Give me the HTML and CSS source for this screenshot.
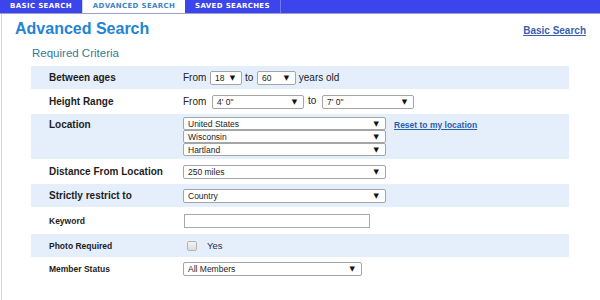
FILE: index.html
```html
<!DOCTYPE html>
<html lang="en">
<head>
    <meta charset="UTF-8">
    <meta name="viewport" content="width=device-width, initial-scale=1.0">
    <title>Advanced Search</title>
    <link rel="stylesheet" href="styles.css">
</head>
<body>
    <nav class="tabs">
        <a href="#" class="tab">Basic Search</a>
        <a href="#" class="tab active">Advanced Search</a>
        <a href="#" class="tab">Saved Searches</a>
    </nav>
    <div class="page">
        <div class="page-head">
            <h1>Advanced Search</h1>
            <a href="#" class="basic-link">Basic Search</a>
        </div>
        <h2>Required Criteria</h2>
        <table class="criteria">
            <tr class="shade">
                <td class="label">Between ages</td>
                <td class="value">
                    From <span class="select age">18</span> to <span class="select age wide">60</span> years old
                </td>
            </tr>
            <tr class="tall">
                <td class="label">Height Range</td>
                <td class="value">
                    From <span class="select height">4' 0"</span> <span class="to">to</span> <span class="select height">7' 0"</span>
                </td>
            </tr>
            <tr class="shade">
                <td class="label top">Location</td>
                <td class="value">
                    <div class="location">
                        <div class="stack">
                            <span class="select long">United States</span>
                            <span class="select long">Wisconsin</span>
                            <span class="select long">Hartland</span>
                        </div>
                        <a href="#" class="reset">Reset to my location</a>
                    </div>
                </td>
            </tr>
            <tr class="tall">
                <td class="label">Distance From Location</td>
                <td class="value"><span class="select long">250 miles</span></td>
            </tr>
            <tr class="shade">
                <td class="label">Strictly restrict to</td>
                <td class="value"><span class="select long">Country</span></td>
            </tr>
            <tr class="taller">
                <td class="label small">Keyword</td>
                <td class="value"><span class="text-input"></span></td>
            </tr>
            <tr class="shade">
                <td class="label small">Photo Required</td>
                <td class="value"><span class="checkbox"></span><span class="yes">Yes</span></td>
            </tr>
            <tr class="last">
                <td class="label small">Member Status</td>
                <td class="value"><span class="select status">All Members</span></td>
            </tr>
        </table>
    </div>
</body>
</html>
```

FILE: styles.css
```css
/* General */
* {
    margin: 0;
    padding: 0;
    box-sizing: border-box;
}

body {
    font-family: "Liberation Sans", Arial, sans-serif;
    background-color: #fff;
    color: #222;
}

/* Tab bar */
.tabs {
    display: flex;
    height: 14px;
    background-color: #3c44ee;
    border-bottom: 1px solid #9aa0c8;
}

.tab {
    flex: none;
    white-space: nowrap;
    font-family: "DejaVu Sans", Verdana, sans-serif;
    font-size: 7px;
    font-weight: bold;
    letter-spacing: 0.35px;
    text-transform: uppercase;
    color: #fff;
    text-decoration: none;
    text-align: center;
    line-height: 13px;
}

.tab:first-child {
    width: 82px;
}

.tab.active {
    background-color: #fff;
    color: #3d86c4;
    width: 103px;
    border-left: 1px solid #c9d6ee;
}

.tab:last-child {
    width: 96px;
    border-right: 1px solid #6f78f2;
}

/* Page */
.page {
    margin-left: 1px;
    border-left: 1px solid #d6d6d6;
    min-height: 286px;
    padding: 0 0 0 13px;
}

.page-head {
    display: flex;
    justify-content: space-between;
    align-items: flex-end;
    padding: 5px 14px 0 0;
}

h1 {
    font-size: 16px;
    font-weight: bold;
    color: #2384d6;
    line-height: 20px;
}

.basic-link {
    font-size: 10px;
    font-weight: bold;
    color: #3b5fae;
    margin-bottom: 3px;
}

h2 {
    font-size: 11.5px;
    font-weight: normal;
    color: #357a95;
    margin: 7px 0 0 17px;
    line-height: 14px;
}

/* Criteria table */
.criteria {
    width: 538px;
    margin: 6px 0 0 16px;
    border-collapse: collapse;
}

.criteria tr {
    height: 23px;
}

.criteria tr.tall {
    height: 25px;
}

.criteria tr.taller {
    height: 27px;
}

.criteria tr.last {
    height: 24px;
}

.criteria tr.shade {
    background-color: #e5effc;
}

.label {
    width: 152px;
    padding-left: 18px;
    font-size: 10px;
    font-weight: bold;
    color: #1d1d1d;
    vertical-align: middle;
}

.label.top {
    vertical-align: top;
    padding-top: 5px;
}

.label.small {
    font-size: 8.5px;
}

.value {
    font-size: 10px;
    color: #222;
    vertical-align: middle;
}

/* Fake selects */
.select {
    display: inline-flex;
    justify-content: space-between;
    align-items: center;
    height: 14px;
    padding: 0 6px 0 4px;
    border: 1px solid #a5a5a5;
    border-radius: 2px;
    background-color: #fff;
    font-size: 8.5px;
    color: #222;
    vertical-align: middle;
}

.select::after {
    content: "\25BC";
    font-family: "DejaVu Sans", sans-serif;
    font-size: 7px;
    color: #111;
}

.select.age {
    width: 32px;
    margin: 0 0 0 1px;
}

.select.age.wide {
    width: 39px;
}

.select.height {
    width: 92px;
    margin-left: 3px;
}

.to {
    margin-left: 1px;
}

.select.long {
    width: 203px;
}

.select.status {
    width: 179px;
}

.location {
    display: flex;
    align-items: flex-start;
    padding: 3px 0 3px;
}

.stack {
    display: flex;
    flex-direction: column;
}

.stack .select {
    height: 13px;
}

.reset {
    font-size: 8.5px;
    font-weight: bold;
    color: #2a5db0;
    margin: 3px 0 0 8px;
}

.text-input {
    display: inline-block;
    width: 186px;
    height: 14px;
    margin-left: 1px;
    border: 1px solid #a9a9a9;
    background-color: #fff;
    vertical-align: middle;
}

.checkbox {
    display: inline-block;
    width: 10px;
    height: 10px;
    margin-left: 4px;
    border: 1px solid #b4b4b4;
    border-radius: 2px;
    background: linear-gradient(#f4f4f4, #dcdcdc);
    vertical-align: middle;
}

.yes {
    font-size: 9.5px;
    color: #2b2b4a;
    margin-left: 10px;
    vertical-align: middle;
}
```
